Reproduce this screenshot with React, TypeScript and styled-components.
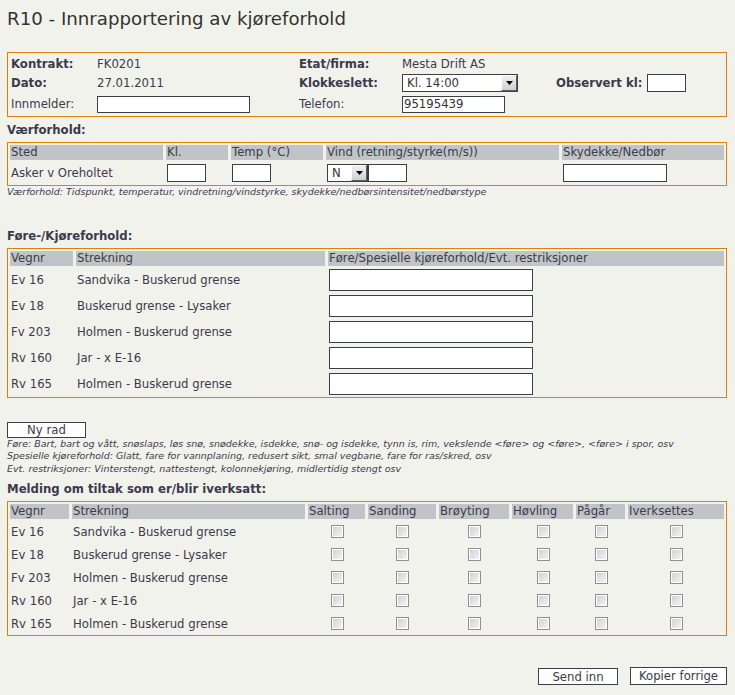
import React from 'react';
import styled, { createGlobalStyle } from 'styled-components';

const GlobalStyle = createGlobalStyle`
  html, body {
    margin: 0;
    background: #f2f2ec;
  }
  body {
    font-family: "DejaVu Sans", Verdana, sans-serif;
    font-size: 11.7px;
    color: #3b3a4c;
  }
`;

const ORANGE = '#e07f0a';

const Page = styled.div`
  width: 720px;
  padding: 0 8px 0 7px;
`;

const Title = styled.h1`
  margin: 0;
  padding-top: 8px;
  font-size: 18.2px;
  line-height: 22px;
  font-weight: normal;
  color: #333;
`;

const Box = styled.div<{ $top?: number }>`
  margin-top: ${p => p.$top ?? 0}px;
  border: 1px solid ${ORANGE};
  padding: 2px 2px 0;
`;

// hovedinfo: kontrakt, dato, innmelder osv
const InfoGrid = styled.div`
  display: grid;
  grid-template-columns: 86px 202px 103px 154px 91px 1fr;
  grid-template-rows: 19px 20px 22px;
  align-items: center;
  padding: 0 1px;
  margin: -1px 0 1px;
`;

const Label = styled.span<{ $bold?: boolean }>`
  font-weight: ${p => (p.$bold ? 'bold' : 'normal')};
  white-space: nowrap;
`;

const SectionLabel = styled.div<{ $top: number }>`
  margin-top: ${p => p.$top}px;
  margin-bottom: 5px;
  font-weight: bold;
  line-height: 14px;
`;

const Row = styled.div<{ $cols: string; $h: number }>`
  display: grid;
  grid-template-columns: ${p => p.$cols};
  column-gap: 3px;
  height: ${p => p.$h}px;
  align-items: center;
`;

const HeadRow = styled(Row)`
  align-items: stretch;
  margin-bottom: 1px;
`;

const HeadCell = styled.div`
  background: #c0c4c6;
  padding-left: 1px;
  line-height: 15px;
  white-space: nowrap;
  overflow: hidden;
`;

const Cell = styled.div<{ $center?: boolean }>`
  display: flex;
  align-items: center;
  justify-content: ${p => (p.$center ? 'center' : 'flex-start')};
  padding-left: 1px;
  white-space: nowrap;
`;

const TextInput = styled.input<{ $w: number; $h?: number }>`
  box-sizing: border-box;
  width: ${p => p.$w}px;
  height: ${p => p.$h ?? 18}px;
  margin: 0;
  padding: 0 1px;
  border: 1px solid #3a4048;
  background: #fff;
  font-family: inherit;
  font-size: 11.7px;
  color: #333;
  outline: none;
`;

const SelectBox = styled.div<{ $w: number }>`
  box-sizing: border-box;
  display: flex;
  align-items: center;
  width: ${p => p.$w}px;
  height: 18px;
  border: 1px solid #3a4048;
  background: #fff;
`;

const SelectValue = styled.span`
  flex: 1;
  padding-left: 4px;
  color: #333;
`;

const ArrowButton = styled.span`
  box-sizing: border-box;
  display: flex;
  align-items: center;
  justify-content: center;
  width: 16px;
  height: 16px;
  border: 1px solid;
  border-color: #fff #606060 #606060 #fff;
  background: linear-gradient(#f0f0f0, #d0d0d0);
`;

const Note = styled.div`
  font-size: 9.5px;
  font-style: italic;
  line-height: 12.5px;
`;

const Button = styled.button<{ $w: number; $h?: number }>`
  box-sizing: border-box;
  width: ${p => p.$w}px;
  height: ${p => p.$h ?? 17}px;
  margin: 0;
  padding: 0;
  border: 1px solid #3a4048;
  background: #fff;
  font-family: inherit;
  font-size: 11.7px;
  color: #3b3a4c;
  line-height: 14px;
`;

const ButtonRow = styled.div`
  margin-top: 24px;
`;

const Check = styled.input.attrs({ type: 'checkbox' })`
  appearance: none;
  box-sizing: border-box;
  width: 13px;
  height: 13px;
  margin: 0;
  border: 1px solid #909090;
  box-shadow: inset 0 0 0 1px #fff;
  background: linear-gradient(135deg, #cfcfd4, #f6f6f6);
`;

const Footer = styled.div`
  display: flex;
  justify-content: flex-end;
  align-items: flex-end;
  gap: 12px;
  margin-top: 31px;
`;

const Select = ({ value, w }: { value: string; w: number }) => (
  <SelectBox $w={w}>
    <SelectValue>{value}</SelectValue>
    <ArrowButton>
      <svg width="7" height="4" viewBox="0 0 7 4">
        <path d="M0 0h7L3.5 4z" fill="#000" />
      </svg>
    </ArrowButton>
  </SelectBox>
);

const roads = [
  ['Ev 16', 'Sandvika - Buskerud grense'],
  ['Ev 18', 'Buskerud grense - Lysaker'],
  ['Fv 203', 'Holmen - Buskerud grense'],
  ['Rv 160', 'Jar - x E-16'],
  ['Rv 165', 'Holmen - Buskerud grense'],
];

const weatherCols = '153px 62px 92px 233px 1fr';
const roadCols = '63px 249px 1fr';
const actionCols = '59px 233px 57px 68px 70px 61px 49px 1fr';
const actions = ['Salting', 'Sanding', 'Brøyting', 'Høvling', 'Pågår', 'Iverksettes'];

export default function App() {
  return (
    <Page>
      <GlobalStyle />
      <Title>R10 - Innrapportering av kjøreforhold</Title>

      <Box $top={22}>
        <InfoGrid>
          <Label $bold>Kontrakt:</Label>
          <span>FK0201</span>
          <Label $bold>Etat/firma:</Label>
          <span>Mesta Drift AS</span>
          <span />
          <span />

          <Label $bold>Dato:</Label>
          <span>27.01.2011</span>
          <Label $bold>Klokkeslett:</Label>
          <Select value="Kl. 14:00" w={116} />
          <Label $bold>Observert kl:</Label>
          <TextInput $w={39} />

          <Label>Innmelder:</Label>
          <TextInput $w={153} $h={17} />
          <Label>Telefon:</Label>
          <TextInput $w={103} $h={17} defaultValue="95195439" />
          <span />
          <span />
        </InfoGrid>
      </Box>

      <SectionLabel $top={6}>Værforhold:</SectionLabel>
      <Box>
        <HeadRow $cols={weatherCols} $h={15}>
          <HeadCell>Sted</HeadCell>
          <HeadCell>Kl.</HeadCell>
          <HeadCell>Temp (°C)</HeadCell>
          <HeadCell>Vind (retning/styrke(m/s))</HeadCell>
          <HeadCell>Skydekke/Nedbør</HeadCell>
        </HeadRow>
        <Row $cols={weatherCols} $h={24}>
          <Cell>Asker v Oreholtet</Cell>
          <Cell><TextInput $w={39} /></Cell>
          <Cell><TextInput $w={39} /></Cell>
          <Cell>
            <Select value="N" w={41} />
            <TextInput $w={39} />
          </Cell>
          <Cell><TextInput $w={104} /></Cell>
        </Row>
      </Box>
      <Note>Værforhold: Tidspunkt, temperatur, vindretning/vindstyrke, skydekke/nedbørsintensitet/nedbørstype</Note>

      <SectionLabel $top={30}>Føre-/Kjøreforhold:</SectionLabel>
      <Box>
        <HeadRow $cols={roadCols} $h={15}>
          <HeadCell>Vegnr</HeadCell>
          <HeadCell>Strekning</HeadCell>
          <HeadCell>Føre/Spesielle kjøreforhold/Evt. restriksjoner</HeadCell>
        </HeadRow>
        {roads.map(([nr, name]) => (
          <Row key={nr} $cols={roadCols} $h={26}>
            <Cell>{nr}</Cell>
            <Cell>{name}</Cell>
            <Cell><TextInput $w={204} $h={22} /></Cell>
          </Row>
        ))}
      </Box>

      <ButtonRow>
        <Button $w={79} $h={16}>Ny rad</Button>
      </ButtonRow>
      <Note>
        Føre: Bart, bart og vått, snøslaps, løs snø, snødekke, isdekke, snø- og isdekke, tynn is, rim, vekslende &lt;føre&gt; og &lt;føre&gt;, &lt;føre&gt; i spor, osv
        <br />
        Spesielle kjøreforhold: Glatt, fare for vannplaning, redusert sikt, smal vegbane, fare for ras/skred, osv
        <br />
        Evt. restriksjoner: Vinterstengt, nattestengt, kolonnekjøring, midlertidig stengt osv
      </Note>

      <SectionLabel $top={7}>Melding om tiltak som er/blir iverksatt:</SectionLabel>
      <Box>
        <HeadRow $cols={actionCols} $h={15}>
          <HeadCell>Vegnr</HeadCell>
          <HeadCell>Strekning</HeadCell>
          {actions.map(a => (
            <HeadCell key={a}>{a}</HeadCell>
          ))}
        </HeadRow>
        {roads.map(([nr, name]) => (
          <Row key={nr} $cols={actionCols} $h={23}>
            <Cell>{nr}</Cell>
            <Cell>{name}</Cell>
            {actions.map(a => (
              <Cell key={a} $center>
                <Check />
              </Cell>
            ))}
          </Row>
        ))}
      </Box>

      <Footer>
        <Button $w={80}>Send inn</Button>
        <Button $w={97} $h={18}>Kopier forrige</Button>
      </Footer>
    </Page>
  );
}
